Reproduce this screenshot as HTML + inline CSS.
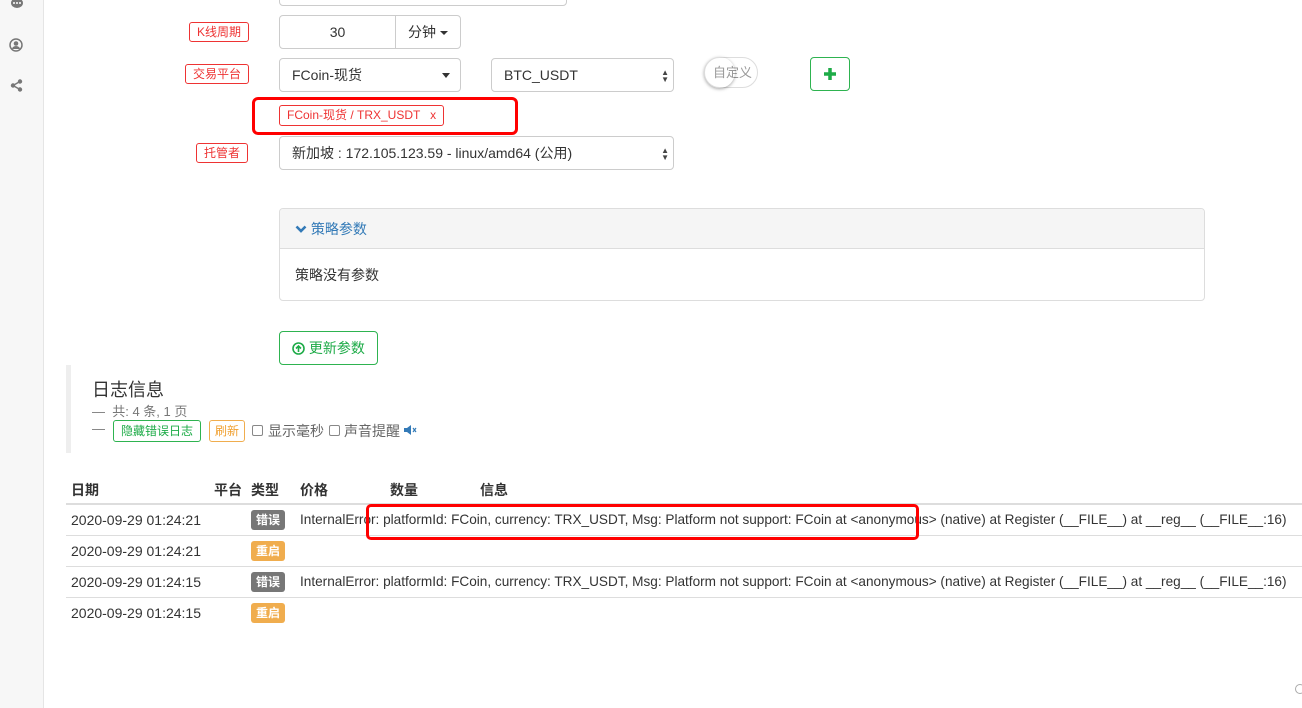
<!DOCTYPE html>
<html><head><meta charset="utf-8"><style>
*{box-sizing:border-box;margin:0;padding:0}
body{width:1302px;height:708px;overflow:hidden;background:#fff;font-family:"Liberation Sans","Noto Sans CJK SC",sans-serif;color:#333;font-size:14px;position:relative}
.a{position:absolute}
.side{left:0;top:0;width:44px;height:708px;background:#f7f7f7;border-right:1px solid #e5e5e5}
.lbl{border:1px solid #e33;color:#e33;border-radius:3px;font-size:12px;height:20px;line-height:18px;padding:0 7px;white-space:nowrap}
.inp{border:1px solid #ccc;border-radius:4px;background:#fff;height:34px;line-height:32px;padding-left:12px;font-size:14px;white-space:nowrap}
.arr{position:absolute;right:10px;top:14px;border-left:4px solid transparent;border-right:4px solid transparent;border-top:5px solid #333}
.ud{position:absolute;right:4px;top:10px;font-size:8px;line-height:7px;color:#444}
.td{font-size:14px;white-space:nowrap}
.info{font-size:13.6px}
.hr{left:66px;width:1236px;height:1px;background:#ddd}
.bad{font-size:12px;color:#fff;border-radius:3px;padding:0 5px;height:20px;line-height:20px;font-weight:bold}
</style></head><body>
<div class="a side"></div>
<svg class="a" style="left:9px;top:0" width="16" height="10"><ellipse cx="8" cy="3" rx="6" ry="5" fill="#777"/><circle cx="5" cy="3" r="1" fill="#fff"/><circle cx="8" cy="3" r="1" fill="#fff"/><circle cx="11" cy="3" r="1" fill="#fff"/></svg>
<svg class="a" style="left:9px;top:38px" width="14" height="14"><circle cx="7" cy="7" r="6" fill="none" stroke="#777" stroke-width="1.5"/><circle cx="7" cy="5.5" r="2.3" fill="#777"/><path d="M3 11a4 3 0 0 1 8 0z" fill="#777"/></svg>
<svg class="a" style="left:10px;top:79px" width="14" height="13"><circle cx="3" cy="6.5" r="2.2" fill="#777"/><circle cx="10" cy="2.5" r="2.2" fill="#777"/><circle cx="10" cy="10.5" r="2.2" fill="#777"/><path d="M3 6.5L10 2.5M3 6.5L10 10.5" stroke="#777" stroke-width="1.5"/></svg>

<div class="a inp" style="left:279px;top:-28px;width:288px"></div>

<div class="a lbl" style="left:189px;top:22px">K线周期</div>
<div class="a inp" style="left:279px;top:15px;width:117px;border-radius:4px 0 0 4px;padding:0;text-align:center">30</div>
<div class="a inp" style="left:395px;top:15px;width:66px;border-radius:0 4px 4px 0;padding-left:12px">分钟<span style="display:inline-block;margin-left:4px;vertical-align:middle;border-left:4px solid transparent;border-right:4px solid transparent;border-top:4px solid #333"></span></div>

<div class="a lbl" style="left:185px;top:64px">交易平台</div>
<div class="a inp" style="left:279px;top:58px;width:182px">FCoin-现货<span class="arr"></span></div>
<div class="a inp" style="left:491px;top:58px;width:183px">BTC_USDT<span class="ud">▲<br>▼</span></div>
<div class="a" style="left:704px;top:57px;width:54px;height:31px;border:1px solid #ddd;border-radius:16px;font-size:13px;color:#999;line-height:29px;padding-left:8px">自定义</div>
<div class="a" style="left:704px;top:57px;width:31px;height:31px;border-radius:50%;box-shadow:0 1px 3px rgba(0,0,0,.35)"></div>
<div class="a" style="left:810px;top:57px;width:40px;height:34px;border:1px solid #2eb350;border-radius:4px"></div>
<svg class="a" style="left:823px;top:67px" width="14" height="14"><path d="M7 1v12M1 7h12" stroke="#1dab47" stroke-width="3.5"/></svg>

<div class="a" style="left:252px;top:97px;width:266px;height:38px;border:3px solid #f00;border-radius:6px"></div>
<div class="a lbl" style="left:279px;top:105px;height:21px;line-height:19px">FCoin-现货 / TRX_USDT &nbsp; x</div>

<div class="a lbl" style="left:196px;top:143px">托管者</div>
<div class="a inp" style="left:279px;top:136px;width:395px">新加坡 : 172.105.123.59 - linux/amd64 (公用)<span class="ud">▲<br>▼</span></div>

<div class="a" style="left:279px;top:208px;width:926px;height:93px;border:1px solid #ddd;border-radius:4px;overflow:hidden">
<div style="height:40px;background:#f5f5f5;border-bottom:1px solid #ddd;color:#337ab7;line-height:40px;padding-left:15px;font-size:14px"><svg width="12" height="10" style="vertical-align:0"><path d="M1.5 2.5L6 7l4.5-4.5" stroke="#337ab7" stroke-width="2.6" fill="none"/></svg> 策略参数</div>
<div style="padding:16px 15px;font-size:14px">策略没有参数</div>
</div>

<div class="a" style="left:279px;top:331px;width:99px;height:34px;border:1px solid #2eb350;border-radius:4px;color:#1dab47;font-size:14px;line-height:32px;text-align:center">
<svg width="13" height="13" style="vertical-align:-2px"><circle cx="6.5" cy="6.5" r="5.5" fill="none" stroke="#1dab47" stroke-width="1.6"/><path d="M6.5 10V4M4 6.5l2.5-2.5 2.5 2.5" stroke="#1dab47" stroke-width="1.6" fill="none"/></svg> 更新参数</div>

<div class="a" style="left:66px;top:365px;width:5px;height:88px;background:#eee"></div>
<div class="a" style="left:92px;top:376px;font-size:18px">日志信息</div>
<div class="a" style="left:92px;top:401px;font-size:13px;color:#777">—&nbsp; 共: 4 条, 1 页</div>
<div class="a" style="left:92px;top:421px;font-size:13px;color:#777">—</div>
<div class="a" style="left:113px;top:420px;width:88px;height:22px;border:1px solid #2eb350;border-radius:3px;color:#1dab47;font-size:12px;text-align:center;line-height:20px">隐藏错误日志</div>
<div class="a" style="left:209px;top:420px;width:36px;height:22px;border:1px solid #f0ad4e;border-radius:3px;color:#f0a030;font-size:12px;text-align:center;line-height:20px">刷新</div>
<div class="a" style="left:252px;top:425px;width:11px;height:11px;border:1px solid #888;border-radius:2px"></div>
<div class="a" style="left:268px;top:421px;font-size:14px;color:#666">显示毫秒</div>
<div class="a" style="left:329px;top:425px;width:11px;height:11px;border:1px solid #888;border-radius:2px"></div>
<div class="a" style="left:344px;top:421px;font-size:14px;color:#666">声音提醒</div>
<svg class="a" style="left:404px;top:425px" width="13" height="10"><path d="M0 3h3l4-3v10L3 7H0z" fill="#337ab7"/><path d="M9 3l3 4M12 3l-3 4" stroke="#337ab7" stroke-width="1.2"/></svg>

<div class="a td" style="left:71px;top:480px;font-weight:bold">日期</div>
<div class="a td" style="left:214px;top:480px;font-weight:bold">平台</div>
<div class="a td" style="left:251px;top:480px;font-weight:bold">类型</div>
<div class="a td" style="left:300px;top:480px;font-weight:bold">价格</div>
<div class="a td" style="left:390px;top:480px;font-weight:bold">数量</div>
<div class="a td" style="left:480px;top:480px;font-weight:bold">信息</div>
<div class="a hr" style="top:503px;height:2px"></div>
<div class="a hr" style="top:535px"></div>
<div class="a hr" style="top:566px"></div>
<div class="a hr" style="top:597px"></div>

<div class="a td" style="left:71px;top:512px">2020-09-29 01:24:21</div>
<div class="a bad" style="left:251px;top:510px;background:#777">错误</div>
<div class="a td info" style="left:300px;top:512px">InternalError: platformId: FCoin, currency: TRX_USDT, Msg: Platform not support: FCoin at &lt;anonymous&gt; (native) at Register (__FILE__) at __reg__ (__FILE__:16)</div>
<div class="a td" style="left:71px;top:543px">2020-09-29 01:24:21</div>
<div class="a bad" style="left:251px;top:541px;background:#f0ad4e">重启</div>
<div class="a td" style="left:71px;top:574px">2020-09-29 01:24:15</div>
<div class="a bad" style="left:251px;top:572px;background:#777">错误</div>
<div class="a td info" style="left:300px;top:574px">InternalError: platformId: FCoin, currency: TRX_USDT, Msg: Platform not support: FCoin at &lt;anonymous&gt; (native) at Register (__FILE__) at __reg__ (__FILE__:16)</div>
<div class="a td" style="left:71px;top:605px">2020-09-29 01:24:15</div>
<div class="a bad" style="left:251px;top:603px;background:#f0ad4e">重启</div>

<div class="a" style="left:366px;top:504px;width:553px;height:36px;border:3px solid #f00;border-radius:5px"></div>
<div class="a" style="left:1295px;top:684px;width:10px;height:10px;border:1px solid #aaa;border-radius:50%"></div>
</body></html>
